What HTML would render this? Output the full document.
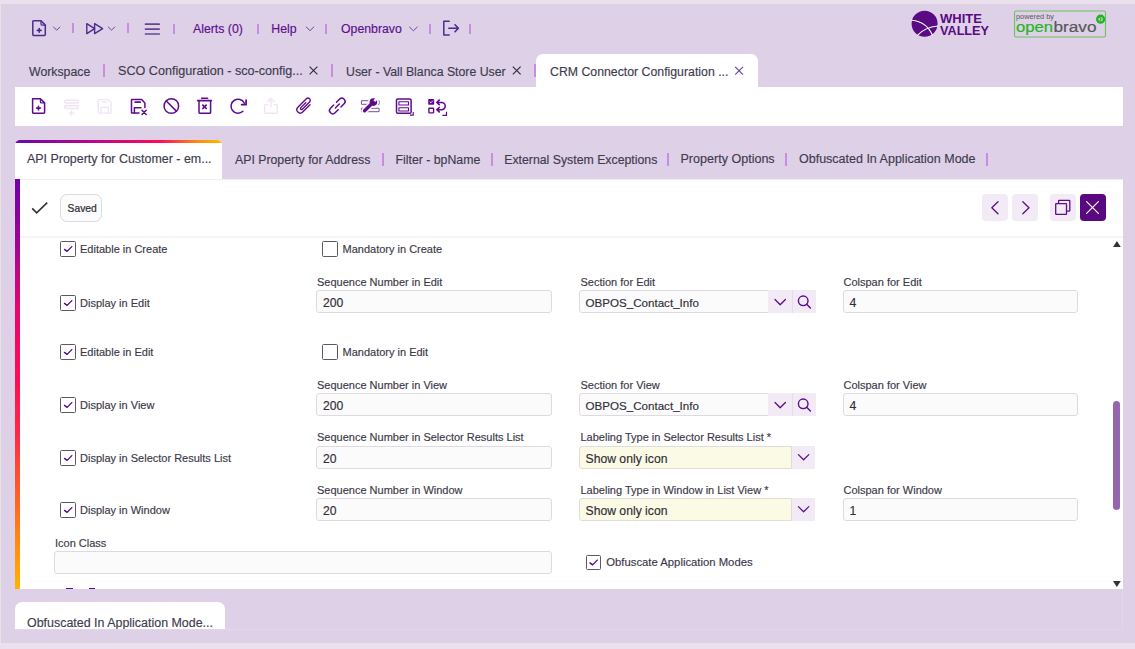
<!DOCTYPE html>
<html><head><meta charset="utf-8">
<style>
*{box-sizing:border-box;margin:0;padding:0}
html,body{width:1135px;height:649px;overflow:hidden}
body{background:#ebe1ee;font-family:"Liberation Sans",sans-serif;position:relative;color:#3b3848;-webkit-text-stroke:0.15px currentColor}
.a{position:absolute;white-space:nowrap}
#main{left:1px;top:4px;width:1134px;height:639px;background:#ddd0e7;border-top:1px solid #d8d3dc;border-left:1px solid #d8d3dc;border-bottom:1px solid #d8d3dc}
.menu{color:#5b0f8c;font-size:12.3px;line-height:12.3px}
.sep{width:2px;background:#c78ce4}
.wtab{font-size:12.3px;color:#3e3b4e;line-height:12.3px}
.stab{font-size:12.3px;color:#3e3b4e;line-height:12.3px}
.white{background:#fff}
.lbl{font-size:11px;color:#3b3848;line-height:11px}
.inp{background:#fbfbfb;border:1px solid #dedbe0;border-radius:3px;height:23px}
.yel{background:#fbfae4;border:1px solid #dfded6;border-radius:3px 0 0 3px;height:23px}
.val{font-size:12.2px;color:#2f2d38;line-height:12.2px}
.cb{width:15.3px;height:15.2px;border:1.7px solid #5d5865;border-radius:1.5px;background:#fff}
.btn{background:#f2ebf6;border-radius:4px;width:26px;height:27px}
.dd{background:#f2ebf6;height:23px;width:24px}
</style></head><body>
<div id="main" class="a"></div>

<!-- top menu -->
<div class="a menu" style="left:193px;top:22.5px">Alerts (0)</div>
<div class="a menu" style="left:271.3px;top:22.5px">Help</div>
<div class="a menu" style="left:341px;top:22.5px">Openbravo</div>
<div class="a sep" style="left:72px;top:23px;height:10px"></div>
<div class="a sep" style="left:127px;top:23px;height:10px"></div>
<div class="a sep" style="left:173px;top:24px;height:10px"></div>
<div class="a sep" style="left:257px;top:24px;height:10px"></div>
<div class="a sep" style="left:325px;top:24px;height:10px"></div>
<div class="a sep" style="left:429px;top:24px;height:10px"></div>
<div class="a sep" style="left:469px;top:24px;height:10px"></div>

<!-- window tabs -->
<div class="a white" style="left:536px;top:54px;width:222px;height:34px;border-radius:7px 7px 0 0"></div>
<div class="a wtab" style="left:29px;top:65.5px">Workspace</div>
<div class="a wtab" style="left:118px;top:65.3px;font-size:12.6px">SCO Configuration - sco-config...</div>
<div class="a wtab" style="left:346px;top:65.5px">User - Vall Blanca Store User</div>
<div class="a wtab" style="left:550px;top:65.5px">CRM Connector Configuration ...</div>
<div class="a sep" style="left:103px;top:64px;height:13px"></div>
<div class="a sep" style="left:331px;top:64px;height:13px"></div>
<div class="a sep" style="left:534px;top:64px;height:13px"></div>

<!-- toolbar -->
<div class="a white" style="left:15px;top:87px;width:1108px;height:39px"></div>

<!-- sub tabs -->
<div class="a white" style="left:15px;top:140px;width:207px;height:39px;border-radius:5px 5px 0 0;overflow:hidden"><div style="height:3px;background:linear-gradient(90deg,#6a0aa6,#b3068a 35%,#ff0a5a 70%,#ff8a14 88%,#ffba00)"></div></div>
<div class="a stab" style="left:27px;top:153.4px;font-size:12.45px">API Property for Customer - em...</div>
<div class="a stab" style="left:235px;top:153.5px">API Property for Address</div>
<div class="a stab" style="left:395.5px;top:153.5px">Filter - bpName</div>
<div class="a stab" style="left:504.2px;top:153.5px">External System Exceptions</div>
<div class="a stab" style="left:680.5px;top:153.4px;font-size:12.55px">Property Options</div>
<div class="a stab" style="left:799px;top:153.4px;font-size:12.5px">Obfuscated In Application Mode</div>
<div class="a sep" style="left:382px;top:153px;height:13px"></div>
<div class="a sep" style="left:491px;top:153px;height:13px"></div>
<div class="a sep" style="left:667px;top:153px;height:13px"></div>
<div class="a sep" style="left:785px;top:153px;height:13px"></div>
<div class="a sep" style="left:986px;top:153px;height:13px"></div>

<!-- form -->
<div class="a white" style="left:15px;top:179px;width:1108px;height:410px"></div>
<div class="a" style="left:15px;top:179px;width:5px;height:410px;background:linear-gradient(180deg,#7000aa 0%,#a8068e 18%,#e8066e 32%,#ff0a55 48%,#ff2a45 62%,#ff6a22 80%,#ffb400 100%)"></div>
<div class="a" style="left:20px;top:179px;width:1103px;height:1px;background:#f2edf4"></div>
<div class="a" style="left:20px;top:236px;width:1103px;height:2px;background:#f6f3f7"></div>

<!-- Saved button -->
<div class="a" style="left:60px;top:194px;width:42px;height:28px;border:1px solid #dcd9df;border-radius:7px;background:#fcfcfc"></div>
<div class="a" style="left:67.6px;top:204.1px;font-size:10.3px;line-height:10.3px;color:#2f2d38;-webkit-text-stroke:0.22px #2f2d38">Saved</div>

<!-- nav buttons -->
<div class="a btn" style="left:982px;top:194px"></div>
<div class="a btn" style="left:1012px;top:194px"></div>
<div class="a btn" style="left:1050px;top:194px"></div>
<div class="a btn" style="left:1080px;top:194px;background:#5a0882"></div>

<!-- form rows -->
<div class="a cb" style="left:60.3px;top:241.35px"></div>
<div class="a lbl" style="left:80px;top:244px">Editable in Create</div>
<div class="a cb" style="left:322.3px;top:241.35px"></div>
<div class="a lbl" style="left:342.5px;top:244px">Mandatory in Create</div>

<div class="a lbl" style="left:317px;top:276.5px">Sequence Number in Edit</div>
<div class="a lbl" style="left:580.5px;top:276.5px">Section for Edit</div>
<div class="a lbl" style="left:843.5px;top:276.5px">Colspan for Edit</div>
<div class="a cb" style="left:60.3px;top:295.35px"></div>
<div class="a lbl" style="left:80px;top:297.5px">Display in Edit</div>
<div class="a inp" style="left:316px;top:290px;width:236px"></div>
<div class="a val" style="left:323px;top:296.5px">200</div>
<div class="a inp" style="left:579px;top:290px;width:190px;border-radius:3px 0 0 3px"></div>
<div class="a val" style="left:585.5px;top:296.8px;font-size:11.6px">OBPOS_Contact_Info</div>
<div class="a dd" style="left:768px;top:290px;width:48px"></div><div class="a" style="left:792px;top:290px;width:1px;height:23px;background:#e4dde9"></div>
<div class="a inp" style="left:843px;top:290px;width:235px"></div>
<div class="a val" style="left:849.5px;top:296.5px">4</div>

<div class="a cb" style="left:60.3px;top:344.35px"></div>
<div class="a lbl" style="left:80px;top:347px">Editable in Edit</div>
<div class="a cb" style="left:322.3px;top:344.35px"></div>
<div class="a lbl" style="left:342.5px;top:347px">Mandatory in Edit</div>

<div class="a lbl" style="left:317px;top:379.5px">Sequence Number in View</div>
<div class="a lbl" style="left:580.5px;top:379.5px">Section for View</div>
<div class="a lbl" style="left:843.5px;top:379.5px">Colspan for View</div>
<div class="a cb" style="left:60.3px;top:397.35px"></div>
<div class="a lbl" style="left:80px;top:400px">Display in View</div>
<div class="a inp" style="left:316px;top:393px;width:236px"></div>
<div class="a val" style="left:323px;top:399.5px">200</div>
<div class="a inp" style="left:579px;top:393px;width:190px;border-radius:3px 0 0 3px"></div>
<div class="a val" style="left:585.5px;top:399.8px;font-size:11.6px">OBPOS_Contact_Info</div>
<div class="a dd" style="left:768px;top:393px;width:48px"></div><div class="a" style="left:792px;top:393px;width:1px;height:23px;background:#e4dde9"></div>
<div class="a inp" style="left:843px;top:393px;width:235px"></div>
<div class="a val" style="left:849.5px;top:399.5px">4</div>

<div class="a lbl" style="left:317px;top:432px">Sequence Number in Selector Results List</div>
<div class="a lbl" style="left:580.5px;top:432px">Labeling Type in Selector Results List *</div>
<div class="a cb" style="left:60.3px;top:450.35px"></div>
<div class="a lbl" style="left:80px;top:453px">Display in Selector Results List</div>
<div class="a inp" style="left:316px;top:446px;width:236px"></div>
<div class="a val" style="left:323px;top:452.5px">20</div>
<div class="a yel" style="left:579px;top:446px;width:213px"></div>
<div class="a val" style="left:585.5px;top:452.5px">Show only icon</div>
<div class="a dd" style="left:792px;top:446px;width:23px"></div>

<div class="a lbl" style="left:317px;top:484.5px">Sequence Number in Window</div>
<div class="a lbl" style="left:580.5px;top:484.5px">Labeling Type in Window in List View *</div>
<div class="a lbl" style="left:843.5px;top:484.5px">Colspan for Window</div>
<div class="a cb" style="left:60.3px;top:502.35px"></div>
<div class="a lbl" style="left:80px;top:505px">Display in Window</div>
<div class="a inp" style="left:316px;top:498px;width:236px"></div>
<div class="a val" style="left:323px;top:504.5px">20</div>
<div class="a yel" style="left:579px;top:498px;width:213px"></div>
<div class="a val" style="left:585.5px;top:504.5px">Show only icon</div>
<div class="a dd" style="left:792px;top:498px;width:23px"></div>
<div class="a inp" style="left:843px;top:498px;width:235px"></div>
<div class="a val" style="left:849.5px;top:504.5px">1</div>

<div class="a lbl" style="left:55px;top:537.5px">Icon Class</div>
<div class="a inp" style="left:54px;top:551px;width:498px"></div>
<div class="a cb" style="left:585.8px;top:554.85px"></div>
<div class="a lbl" style="left:606.3px;top:557.3px;font-size:11.3px">Obfuscate Application Modes</div>

<!-- scrollbar -->
<div class="a" style="left:1113px;top:401px;width:7px;height:109px;border-radius:4px;background:#9366ae"></div>

<div class="a" style="left:15px;top:629px;width:1108px;height:1px;background:#e2d8ea"></div>
<div class="a" style="left:1122px;top:589px;width:1px;height:40px;background:#e2d8ea"></div>
<div class="a" style="left:66px;top:588px;width:7px;height:1px;background:#50108e"></div>
<div class="a" style="left:89px;top:588px;width:6px;height:1px;background:#50108e"></div>
<!-- bottom tab -->
<div class="a white" style="left:15px;top:602px;width:210px;height:27px;border-radius:7px 7px 0 0;overflow:hidden"><div class="a stab" style="left:12px;top:14.8px;font-size:12.45px">Obfuscated In Application Mode...</div></div>

<svg class="a" style="left:0;top:0" width="1135" height="649" viewBox="0 0 1135 649" fill="none" stroke-linecap="round" stroke-linejoin="round">
<!-- top menu icons -->
<g stroke="#4f2a8e" stroke-width="1.5">
<path d="M33.5 20.8H41L45.3 25.1V34.6Q45.3 35.4 44.5 35.4H33.5Q32.8 35.4 32.8 34.6V21.6Q32.8 20.8 33.5 20.8Z"/>
<path d="M41 21.2V24.1Q41 25.1 42 25.1H45" stroke-width="1.2"/>
<path d="M39.2 28.5V32.3M37.3 30.4H41.1" stroke-width="1.6"/>
<path d="M86.8 23.6L94.6 28.6L86.8 33.6Z" stroke-width="1.4"/>
<path d="M94.6 23.6L102.6 28.6L94.6 33.6Z" stroke-width="1.4"/>
<path d="M145.5 24.2H159.2M145.5 29.1H159.2M145.5 34H159.2" stroke="#654596" stroke-width="1.7"/>
<path d="M443.8 21.2H449.2M443.8 21.2V35H449.2"/>
<path d="M448.8 28.3H458.2M455 24.8L458.4 28.3L455 31.8" stroke-width="1.6"/>
</g>
<g stroke="#6a4a9a" stroke-width="1">
<path d="M53.5 27L56.7 30.2L59.9 27"/>
<path d="M108.3 27L111.5 30.2L114.7 27"/>
<path d="M306.2 27L310 30.6L313.8 27"/>
<path d="M409.5 27L413.4 30.8L417.3 27"/>
</g>
<!-- window tab close -->
<g stroke="#34323c" stroke-width="1.2" stroke-linecap="butt">
<path d="M309.6 66.6L317.4 74.4M317.4 66.6L309.6 74.4"/>
<path d="M512.8 66.6L520.6 74.4M520.6 66.6L512.8 74.4"/>
</g>
<path d="M735.2 66.8L743 74.6M743 66.8L735.2 74.6" stroke="#5d3d9c" stroke-width="1.05" stroke-linecap="butt"/>
<!-- toolbar icons -->
<g stroke="#5e0b8e" stroke-width="1.5">
<path d="M32.6 98.7H40.4L44.6 102.9V112.5Q44.6 113.2 43.9 113.2H33.3Q32.6 113.2 32.6 112.5Z"/>
<path d="M40.4 99V101.9Q40.4 102.9 41.4 102.9H44.3" stroke-width="1.2"/>
<path d="M38.5 106.2V110M36.6 108.1H40.4" stroke-width="1.6"/>
<path d="M139 113H132Q131.5 113 131.5 112.5V100.1Q131.5 99.6 132 99.6H141.6L144.9 103V107.4"/>
<path d="M135.2 102.1H140.2" stroke-width="1.8"/>
<path d="M134.4 113V107.8H141"/>
<path d="M142 110.3L146.2 114.5M146.2 110.3L142 114.5" stroke-width="1.5"/>
<circle cx="171.35" cy="106" r="7.3"/>
<path d="M166.3 101L176.4 111.1"/>
<path d="M201.6 98.3H207.6M197.6 100.6H211.4" stroke-width="1.6"/>
<path d="M199 100.8V112.4Q199 113.3 200 113.3H209.6Q210.6 113.3 210.6 112.4V100.8"/>
<path d="M202.8 105.1L206.2 108.5M206.2 105.1L202.8 108.5" stroke-width="1.7"/>
<path d="M244.4 103.3A7 7 0 1 0 242.9 111.3"/>
<path d="M246.1 100V104.7H241.6" stroke-width="1.7"/>
<path d="M305.3 110.6L311.4 104.4" stroke-width="0"/>
<g transform="translate(304.2 105.8) rotate(-45) scale(0.92)" stroke-width="1.5"><path d="M5.2 3.7H-6A3.7 3.7 0 0 1 -6 -3.7H7A2.45 2.45 0 0 1 7 1.2H-4A1.2 1.2 0 0 1 -4 -1.2H3.6"/></g>
<g transform="translate(337.3 106) rotate(-45) scale(0.86)" stroke-width="1.7"><path d="M-2.2 -3.8H-7.4A3.8 3.8 0 0 0 -7.4 3.8H-2.4M2.2 3.8H7.4A3.8 3.8 0 0 0 7.4 -3.8H2.4M-3.2 0H3.2"/></g>
<path d="M361.8 100.7H379.1V104.3H361.8ZM361.8 108.3H379.1V111.7H361.8Z" stroke="#7d4aa6" stroke-width="1" stroke-linejoin="miter"/>
<path d="M364.6 110.8L371.2 104.2" stroke="#fff" stroke-width="6.4"/>
<circle cx="373.4" cy="102.1" r="5.4" fill="#fff" stroke="none"/>
<path d="M364.6 110.8L371.2 104.2" stroke-width="3.4"/>
<circle cx="373.4" cy="102.1" r="3.8" fill="#5e0b8e" stroke="none"/>
<path d="M374.3 101.2L378.4 97.1" stroke="#fff" stroke-width="2.4" stroke-linecap="butt"/>
<rect x="396.5" y="98.9" width="14.6" height="14.3" rx="1.3"/>

<rect x="398.9" y="101.8" width="9.6" height="3.2" rx="0.3" stroke-width="1.1"/>
<rect x="398.9" y="107.8" width="9.6" height="3.2" rx="0.3" stroke-width="1.1"/>
<path d="M413.2 112V115.1H410" stroke-width="1.1" stroke-linecap="butt" stroke-linejoin="miter"/>
<rect x="428.2" y="98.9" width="6" height="5.8" rx="0.8" fill="#5e0b8e" stroke="none"/>
<path d="M430 102L431 102.8L432.5 101" stroke="#fff" stroke-width="0.8"/>
<rect x="428.9" y="108.2" width="4.7" height="4.7" rx="0.6" stroke-width="1.4"/>
<path d="M437.2 102.4H441.6A3.65 3.65 0 0 1 441.6 109.7H437.2"/>
<path d="M439.2 100.2L437 102.4L439.2 104.6M439.2 107.5L437 109.7L439.2 111.9" stroke-width="1.7"/>
<path d="M446.5 111.8V115.3H442.4" stroke-width="1.2" stroke-linecap="butt" stroke-linejoin="miter"/>
</g>
<g stroke="#efe5f5" stroke-width="1.4">
<rect x="64.6" y="100.2" width="13.8" height="2.8" rx="1.2"/>
<rect x="64.6" y="105.7" width="13.8" height="2.8" rx="1.2"/>
<path d="M71.5 110.8V115.4M69.2 113.1H73.8"/>
<path d="M98.9 99.6H108L111.1 102.7V112.4Q111.1 113.1 110.4 113.1H98.9Q98.2 113.1 98.2 112.4V100.3Q98.2 99.6 98.9 99.6Z"/>
<path d="M102.2 101.9H106.8"/>
<path d="M100.9 113V107.4H108.5V113"/>
<path d="M267.8 104.6H265.3Q264.6 104.6 264.6 105.3V112.6Q264.6 113.3 265.3 113.3H276.6Q277.3 113.3 277.3 112.6V105.3Q277.3 104.6 276.6 104.6H274.2"/>
<path d="M270.9 106.8V98.4M267.7 101.5L270.9 98.3L274.1 101.5"/>
</g>
<!-- form header -->
<path d="M32.2 208.4L36.7 212.9L47.2 202.7" stroke="#37343e" stroke-width="1.7" stroke-linecap="butt" stroke-linejoin="miter"/>
<g stroke="#5e0b8e" stroke-width="1.3">
<path d="M998 201.8L991.8 207.8L998 213.8"/>
<path d="M1022.8 201.8L1029 207.8L1022.8 213.8"/>
<path d="M1058.6 203.4V200.8Q1058.6 200.3 1059.1 200.3H1069.3Q1069.8 200.3 1069.8 200.8V210.6Q1069.8 211.1 1069.3 211.1H1066.6"/>
<rect x="1055.7" y="203.6" width="10.8" height="10.8" rx="0.5"/>
</g>
<path d="M1086.6 201.6L1098.4 213.4M1098.4 201.6L1086.6 213.4" stroke="#fff" stroke-width="1.2"/>
<!-- scroll arrows -->
<path d="M1113 247H1120.8L1116.9 241Z M1113 581H1120.8L1116.9 587Z" fill="#333" stroke="none"/>
<g stroke="#4c0a7e" stroke-width="1.35"><path d="M64.5 249.4L67.1 251.4L71.8 246.6"/><path d="M64.5 303.4L67.1 305.4L71.8 300.6"/><path d="M64.5 352.4L67.1 354.4L71.8 349.6"/><path d="M64.5 405.4L67.1 407.4L71.8 402.6"/><path d="M64.5 458.4L67.1 460.4L71.8 455.6"/><path d="M64.5 510.4L67.1 512.4L71.8 507.6"/><path d="M590.0 562.9L592.6 564.9L597.3 560.1"/></g><g stroke="#5e0b8e" stroke-width="1.4"><path d="M775 299.5L780.2 304.7L785.4 299.5" stroke-width="1.3"/><circle cx="803.2" cy="300.8" r="4.8"/><path d="M806.7 304.3L810.4 308"/><path d="M775 402.5L780.2 407.7L785.4 402.5" stroke-width="1.3"/><circle cx="803.2" cy="403.8" r="4.8"/><path d="M806.7 407.3L810.4 411"/><path d="M798.4 454.6L803.6 459.8L808.8 454.6" stroke-width="1.25"/><path d="M798.4 506.6L803.6 511.8L808.8 506.6" stroke-width="1.25"/></g>
<circle cx="924.6" cy="23.8" r="13" fill="#5a0a82" stroke="none"/>
<path d="M911.8 20.2Q926.5 21.5 932.3 35M917.6 35.2Q925 27.2 937.8 26" stroke="#fff" stroke-width="1.1"/>
<text x="940" y="23" font-family="Liberation Sans" font-weight="bold" font-size="13.6" fill="#5a0a82" stroke="none" textLength="42" lengthAdjust="spacingAndGlyphs">WHITE</text>
<text x="940" y="34.8" font-family="Liberation Sans" font-weight="bold" font-size="13.6" fill="#5a0a82" stroke="none" textLength="49" lengthAdjust="spacingAndGlyphs">VALLEY</text>
<rect x="1014.5" y="11" width="91" height="26" rx="1.5" stroke="#6cc35e" stroke-width="1.1"/>
<text x="1016" y="19" font-family="Liberation Sans" font-size="7.6" fill="#5a5a5a" stroke="none" textLength="38" lengthAdjust="spacingAndGlyphs">powered by</text>
<text x="1016" y="31.8" font-family="Liberation Sans" font-size="15.5" fill="#1fb51f" stroke="#1fb51f" stroke-width="0.2" textLength="37" lengthAdjust="spacingAndGlyphs">open</text>
<text x="1053.5" y="31.8" font-family="Liberation Sans" font-size="15.5" fill="#575757" stroke="#575757" stroke-width="0.2" textLength="43" lengthAdjust="spacingAndGlyphs">bravo</text>
<circle cx="1100.6" cy="19.2" r="3.4" stroke="#1fb51f" stroke-width="2.4"/>
<path d="M1099.6 17.5Q1102 18.5 1100 21" stroke="#1fb51f" stroke-width="1.3"/>
</svg>
</body></html>
